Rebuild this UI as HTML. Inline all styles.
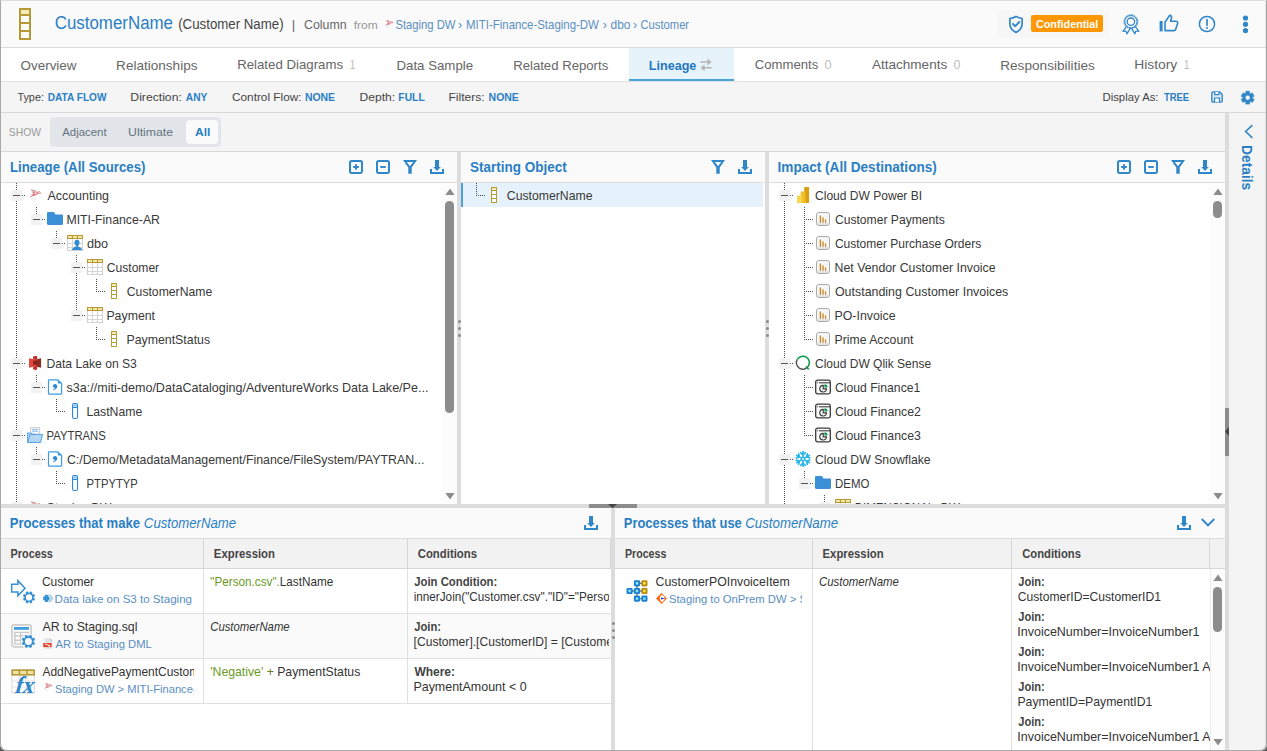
<!DOCTYPE html>
<html lang="en"><head><meta charset="utf-8"><title>CustomerName - Lineage</title>
<style>
html,body{margin:0;padding:0}
body{width:1267px;height:751px;overflow:hidden;position:relative;background:#5a5a5a;font-family:"Liberation Sans","DejaVu Sans",sans-serif}
.app{background:#fff;border-radius:0 0 7px 7px;overflow:hidden}
.frame{left:0;top:0;width:1267px;height:751px;box-sizing:border-box;border:1px solid #a9a9a9;border-right:1px solid #a4a4a4;box-shadow:inset -1px 0 0 rgba(0,0,0,.07);border-top-color:#dedede;border-radius:0 0 7px 7px;pointer-events:none}
div,section,header,nav,aside,.t,i.ico{position:absolute;display:block;margin:0;padding:0}
.t{white-space:nowrap;transform-origin:0 0;font-weight:normal;text-decoration:none}
i.ico{line-height:0;font-style:normal}
i.ico svg{display:block;overflow:visible}
.vd{background-image:linear-gradient(#4c4c4c 50%,rgba(0,0,0,0) 50%);background-size:1px 2px}
.hd{background-image:linear-gradient(90deg,#4c4c4c 50%,rgba(0,0,0,0) 50%);background-size:2px 1px}
.rot{transform-origin:0 0}
</style></head>
<body>
  <div class="app" style="left:0px;top:0px;width:1267px;height:751px;">
    <header class="hdr" style="left:1px;top:1px;width:1265px;height:46px;background:#fafafa;border-bottom:1px solid #dcdcdc">
      <i class="ico" style="left:18px;top:7px"><svg width="12" height="32" viewBox="0 0 12 32" ><rect x="1" y="1" width="10" height="30" fill="#fff" stroke="#b59a35" stroke-width="2"/><rect x="2" y="2" width="8" height="4" fill="#f6ecba"/><path d="M1 7h10M1 15h10M1 23h10" stroke="#b59a35" stroke-width="2" fill="none"/></svg></i>
      <h1 class="t" style="left:53px;top:11px;font-size:18px;line-height:23px;color:#2a7fc4;transform:translateX(0.76px) scaleX(0.9381);">CustomerName</h1>
      <span class="t" style="left:177px;top:14px;font-size:14px;line-height:18px;color:#444;transform:translateX(0.20px) scaleX(0.9472);">(Customer Name)</span>
      <span class="t" style="left:290px;top:15px;font-size:13px;line-height:17px;color:#666;transform:translateX(0.87px) scaleX(1.0256);">|</span>
      <span class="t" style="left:302px;top:15px;font-size:13px;line-height:17px;color:#666;transform:translateX(0.98px) scaleX(0.9504);">Column</span>
      <span class="t" style="left:352px;top:17px;font-size:11.8px;line-height:15px;color:#999;transform:translateX(0.68px) scaleX(1.0203);">from</span>
      <i class="ico" style="left:383px;top:18px"><svg width="10" height="10" viewBox="0 0 15 14" ><path d="M1.6 9.9 L5.6 5.4 L3 1.5 L7.2 1.9 L9.2 3.7 L12.2 2.9 L14.4 5.5 L10.6 6 L8.4 7.6 L4.8 8.4Z" fill="#cf3f49" opacity=".66"/><path d="M6.6 4.4 L8.8 4 L9.8 5.4 L7.6 6.4Z M4.2 2.4 L6.4 2.8 L7 3.8 L5.4 3.8Z M10.6 4 L12.4 3.8 L13 4.8 L11 5Z" fill="#fff" opacity=".7"/><path d="M3 1.4 H7" stroke="#b8c4cc" stroke-width=".7" opacity=".6"/><ellipse cx="6" cy="11.6" rx="3.6" ry="1.6" fill="#ededed" opacity=".6"/></svg></i>
      <a class="t" style="left:394px;top:16px;font-size:12.4px;line-height:16px;color:#5a8fc2;transform:translateX(0.49px) scaleX(0.9068);">Staging DW</a>
      <span class="t" style="left:457px;top:15px;font-size:13px;line-height:17px;color:#5a8fc2;transform:translateX(0.10px) scaleX(0.9653);">›</span>
      <a class="t" style="left:465px;top:16px;font-size:12.4px;line-height:16px;color:#5a8fc2;transform:translateX(0.08px) scaleX(0.9229);">MITI-Finance-Staging-DW</a>
      <span class="t" style="left:601px;top:15px;font-size:13px;line-height:17px;color:#5a8fc2;transform:translateX(0.70px) scaleX(0.9653);">›</span>
      <a class="t" style="left:609px;top:16px;font-size:12.4px;line-height:16px;color:#5a8fc2;transform:translateX(0.52px) scaleX(0.9653);">dbo</a>
      <span class="t" style="left:632px;top:15px;font-size:13px;line-height:17px;color:#5a8fc2;transform:translateX(0.10px) scaleX(0.9653);">›</span>
      <a class="t" style="left:639px;top:16px;font-size:12.4px;line-height:16px;color:#5a8fc2;transform:translateX(0.44px) scaleX(0.9062);">Customer</a>
      <div style="left:996px;top:9px;width:112px;height:28px;background:#f7f7f7;border-radius:3px">
      </div>
      <i class="ico" style="left:1007px;top:13.5px"><svg width="16" height="19" viewBox="0 0 16 19" ><path d="M8 1.4 C9.8 2.4 12 3.2 14.1 3.5 V8.8 C14.1 12.8 11.6 15.8 8 17.4 C4.4 15.8 1.9 12.8 1.9 8.8 V3.5 C4 3.2 6.2 2.4 8 1.4Z" fill="none" stroke="#2f86c9" stroke-width="1.7" stroke-linejoin="round"/><path d="M5 9 L7.3 11.2 L11.2 7" fill="none" stroke="#2f86c9" stroke-width="1.9" stroke-linecap="round" stroke-linejoin="round"/></svg></i>
      <div class="badge" style="left:1030px;top:14px;width:72px;height:17px;background:#ff9800;border-radius:2px">
        <span class="t" style="left:4px;top:2px;font-size:11px;line-height:14px;color:#fff;font-weight:bold;transform:translateX(0.97px) scaleX(0.9813);">Confidential</span>
      </div>
      <i class="ico" style="left:1121px;top:12.6px"><svg width="18" height="21" viewBox="0 0 18 21" ><circle cx="8.9" cy="7.7" r="6.9" fill="none" stroke="#2f86c9" stroke-width="1" stroke-dasharray="2 0.7"/><circle cx="8.9" cy="7.7" r="6.1" fill="none" stroke="#2f86c9" stroke-width="1"/><circle cx="8.9" cy="7.7" r="3.7" fill="#fff" stroke="#2f86c9" stroke-width="1.3"/><path d="M4.4 12.6 L0.9 17.3 L4 17 L4.9 19.9 L8.1 14.6 M13.4 12.6 L16.9 17.3 L13.8 17 L12.9 19.9 L9.7 14.6" fill="none" stroke="#2f86c9" stroke-width="1.2" stroke-linejoin="round"/></svg></i>
      <i class="ico" style="left:1158px;top:13.4px"><svg width="20" height="18" viewBox="0 0 20 18" ><rect x="0.6" y="7" width="3" height="10.4" fill="#2f86c9"/><path d="M6 16.6 V8.2 L10.6 1.4 C12.4 1.4 12.8 3 12.4 4.4 L11.6 7.2 H17 C18.4 7.2 19 8.4 18.6 9.6 L16.6 15.4 C16.3 16.2 15.6 16.6 14.8 16.6Z" fill="none" stroke="#2f86c9" stroke-width="1.6" stroke-linejoin="round"/></svg></i>
      <i class="ico" style="left:1197px;top:14px"><svg width="18" height="18" viewBox="0 0 18 18" ><circle cx="9" cy="9" r="7.6" fill="none" stroke="#2f86c9" stroke-width="1.5"/><path d="M9 4.6 V10.2" stroke="#2f86c9" stroke-width="1.7" stroke-linecap="round"/><circle cx="9" cy="13" r="1.05" fill="#2f86c9"/></svg></i>
      <i class="ico" style="left:1240.5px;top:13.6px"><svg width="7" height="19" viewBox="0 0 7 19" ><circle cx="3.5" cy="3" r="2.6" fill="#2f86c9"/><circle cx="3.5" cy="9.3" r="2.6" fill="#2f86c9"/><circle cx="3.5" cy="15.6" r="2.6" fill="#2f86c9"/></svg></i>
    </header>
    <nav class="tabs" style="left:1px;top:48px;width:1265px;height:34px;background:#fff;border-bottom:1px solid #e2e2e2;box-sizing:border-box">
      <a class="t" style="left:19px;top:9px;font-size:13.6px;line-height:18px;color:#666;transform:translateX(0.60px) scaleX(0.9857);">Overview</a>
      <a class="t" style="left:115px;top:9px;font-size:13.6px;line-height:18px;color:#666;transform:translateX(0.12px) scaleX(0.9965);">Relationships</a>
      <a class="t" style="left:236px;top:8px;font-size:13.6px;line-height:18px;color:#666;transform:translateX(0.14px) scaleX(0.9741);">Related Diagrams</a>
      <span class="t" style="left:348px;top:9px;font-size:12.6px;line-height:16px;color:#bdbdbd;transform:translateX(0.84px) scaleX(0.8028);">1</span>
      <a class="t" style="left:395px;top:9px;font-size:13.6px;line-height:18px;color:#666;transform:translateX(0.44px) scaleX(0.9757);">Data Sample</a>
      <a class="t" style="left:512px;top:9px;font-size:13.6px;line-height:18px;color:#666;transform:translateX(0.15px) scaleX(0.9678);">Related Reports</a>
      <div class="active" style="left:628px;top:0px;width:105px;height:33px;background:#e7f3fb;border-bottom:2px solid #48a5dc;box-sizing:border-box">
        <a class="t" style="left:19px;top:9px;font-size:13.6px;line-height:18px;color:#2277c0;font-weight:bold;transform:translateX(0.78px) scaleX(0.9264);">Lineage</a>
        <i class="ico" style="left:70.6px;top:10px"><svg width="12" height="14" viewBox="0 0 12 14" ><path d="M0.4 4 H8 M11.6 9.8 H4" stroke="#b7b7b7" stroke-width="1.4" fill="none"/><path d="M7.4 0.6 L11.6 4 L7.4 7.4Z M4.6 6.4 L0.4 9.8 L4.6 13.2Z" fill="#b7b7b7"/></svg></i>
      </div>
      <a class="t" style="left:753px;top:8px;font-size:13.6px;line-height:18px;color:#666;transform:translateX(0.74px) scaleX(0.9661);">Comments</a>
      <span class="t" style="left:823px;top:9px;font-size:12.6px;line-height:16px;color:#bdbdbd;transform:translateX(0.55px) scaleX(1.0146);">0</span>
      <a class="t" style="left:870px;top:8px;font-size:13.6px;line-height:18px;color:#666;transform:translateX(0.90px) scaleX(0.9971);">Attachments</a>
      <span class="t" style="left:952px;top:9px;font-size:12.6px;line-height:16px;color:#bdbdbd;transform:translateX(0.57px) scaleX(0.9818);">0</span>
      <a class="t" style="left:999px;top:9px;font-size:13.6px;line-height:18px;color:#666;transform:translateX(0.21px) scaleX(1.0019);">Responsibilities</a>
      <a class="t" style="left:1133px;top:8px;font-size:13.6px;line-height:18px;color:#666;transform:translateX(0.19px) scaleX(1.0188);">History</a>
      <span class="t" style="left:1182px;top:9px;font-size:12.6px;line-height:16px;color:#bdbdbd;transform:translateX(0.64px) scaleX(0.8028);">1</span>
    </nav>
    <div class="toolbar" style="left:1px;top:82px;width:1265px;height:30px;background:#f5f5f5;border-bottom:1px solid #d9d9d9">
      <span class="t" style="left:16px;top:8px;font-size:11.4px;line-height:15px;color:#444;transform:translateX(0.38px) scaleX(0.9530);">Type:</span>
      <span class="t" style="left:46px;top:8px;font-size:11.2px;line-height:15px;color:#2a7fc4;font-weight:bold;transform:translateX(0.74px) scaleX(0.9027);">DATA FLOW</span>
      <span class="t" style="left:129px;top:8px;font-size:11.4px;line-height:15px;color:#444;transform:translateX(0.32px) scaleX(1.0706);">Direction:</span>
      <span class="t" style="left:184px;top:8px;font-size:11.2px;line-height:15px;color:#2a7fc4;font-weight:bold;transform:translateX(0.80px) scaleX(0.9103);">ANY</span>
      <span class="t" style="left:231px;top:8px;font-size:11.4px;line-height:15px;color:#444;transform:translateX(0.01px) scaleX(1.0353);">Control Flow:</span>
      <span class="t" style="left:303px;top:8px;font-size:11.2px;line-height:15px;color:#2a7fc4;font-weight:bold;transform:translateX(0.92px) scaleX(0.9322);">NONE</span>
      <span class="t" style="left:358px;top:8px;font-size:11.4px;line-height:15px;color:#444;transform:translateX(0.54px) scaleX(1.0576);">Depth:</span>
      <span class="t" style="left:397px;top:8px;font-size:11.2px;line-height:15px;color:#2a7fc4;font-weight:bold;transform:translateX(0.33px) scaleX(0.9241);">FULL</span>
      <span class="t" style="left:447px;top:8px;font-size:11.4px;line-height:15px;color:#444;transform:translateX(0.43px) scaleX(1.0593);">Filters:</span>
      <span class="t" style="left:487px;top:8px;font-size:11.2px;line-height:15px;color:#2a7fc4;font-weight:bold;transform:translateX(0.62px) scaleX(0.9354);">NONE</span>
      <span class="t" style="left:1101px;top:8px;font-size:11.4px;line-height:15px;color:#444;transform:translateX(0.49px) scaleX(0.9945);">Display As:</span>
      <span class="t" style="left:1162px;top:8px;font-size:11.2px;line-height:15px;color:#2a7fc4;font-weight:bold;transform:translateX(0.91px) scaleX(0.8451);">TREE</span>
      <i class="ico" style="left:1210px;top:8.8px"><svg width="12" height="12" viewBox="0 0 13 13" ><path d="M2.2 0.9 H9.2 L12.1 3.8 V10.8 C12.1 11.6 11.6 12.1 10.8 12.1 H2.2 C1.4 12.1 0.9 11.6 0.9 10.8 V2.2 C0.9 1.4 1.4 0.9 2.2 0.9Z" fill="#dfeaf5" stroke="#2f86c9" stroke-width="1.5" stroke-linejoin="round"/><path d="M4 1 V4 H8.6 V1" fill="#f5f5f5" stroke="#2f86c9" stroke-width="1.3"/><path d="M3.8 12 V7.6 H9.2 V12" fill="#f5f5f5" stroke="#2f86c9" stroke-width="1.3"/></svg></i>
      <i class="ico" style="left:1239.6px;top:8.6px"><svg width="13.4" height="13.4" viewBox="0 0 13.4 13.4" ><path d="M4.79 2.34 L4.80 0.28 L8.60 0.28 L8.61 2.34 L9.52 2.87 L11.31 1.84 L13.21 5.14 L11.43 6.18 L11.43 7.22 L13.21 8.26 L11.31 11.56 L9.52 10.53 L8.61 11.06 L8.60 13.12 L4.80 13.12 L4.79 11.06 L3.88 10.53 L2.09 11.56 L0.19 8.26 L1.97 7.22 L1.97 6.18 L0.19 5.14 L2.09 1.84 L3.88 2.87Z M9.18 6.70 A2.479 2.479 0 1 0 4.22 6.70 A2.479 2.479 0 1 0 9.18 6.70Z" fill="#2f86c9" fill-rule="evenodd" stroke="#2f86c9" stroke-width="0.6" stroke-linejoin="round"/></svg></i>
    </div>
    <div class="showbar" style="left:1px;top:113px;width:1224px;height:38px;background:#f4f4f4;border-bottom:1px solid #d9d9d9">
      <span class="t" style="left:7px;top:12px;font-size:11.4px;line-height:15px;color:#9a9a9a;transform:translateX(0.83px) scaleX(0.9067);">SHOW</span>
      <div class="seg" style="left:49px;top:4px;width:171px;height:30px;background:#e2e6ea;border-radius:4px">
        <span class="t" style="left:12px;top:8px;font-size:11.4px;line-height:15px;color:#66727f;transform:translateX(0.20px) scaleX(1.0015);">Adjacent</span>
        <span class="t" style="left:78px;top:8px;font-size:11.4px;line-height:15px;color:#66727f;transform:translateX(0.08px) scaleX(1.0769);">Ultimate</span>
        <div class="on" style="left:136px;top:3px;width:32px;height:24px;background:#fbfbfb;border-radius:4px">
          <span class="t" style="left:8px;top:5px;font-size:11.4px;line-height:15px;color:#2a7fc4;font-weight:bold;transform:translateX(0.96px) scaleX(1.0615);">All</span>
        </div>
      </div>
    </div>
    <div class="vsplit" style="left:1225px;top:113px;width:4px;height:637px;background:#dcdcdc">
    </div>
    <div style="left:1225px;top:408px;width:4px;height:48px;background:#8c8c8c">
    </div>
    <i class="ico" style="left:1225px;top:427px"><svg width="4" height="9"><path d="M4 0 V9 L0 4.5Z" fill="#444"/></svg></i>
    <aside class="side" style="left:1229px;top:113px;width:37px;height:637px;background:#f4f4f4">
      <i class="ico" style="left:14.6px;top:10.6px"><svg width="10" height="15" viewBox="0 0 10 15" ><path d="M8.4 1.2 L1.6 7.5 L8.4 13.8" fill="none" stroke="#2f86c9" stroke-width="1.6" stroke-linejoin="miter"/></svg></i>
    </aside>
    <section class="panel" style="left:1px;top:152px;width:456px;height:352px;background:#fff;overflow:hidden">
      <div class="phead" style="left:0px;top:0px;width:456px;height:30px;background:#fafafa;border-bottom:1px solid #dcdcdc">
        <h2 class="t" style="left:8px;top:6px;font-size:14.8px;line-height:19px;color:#2a7fc4;font-weight:bold;transform:translateX(0.94px) scaleX(0.8954);">Lineage (All Sources)</h2>
        <i class="ico" style="left:429px;top:8px"><svg width="14" height="14" viewBox="0 0 14 14" ><path d="M5 0 H9 V7 H10.8 L7 11 L3.2 7 H5Z" fill="#2f86c9"/><path d="M1 9 V13 H13 V9" fill="none" stroke="#2f86c9" stroke-width="2"/></svg></i>
        <i class="ico" style="left:401px;top:8px"><svg width="16" height="14" viewBox="0 0 16 14" ><path d="M1 0 H15 L9.7 7.4 V13.8 H6.3 V7.4Z M4.8 2 H11.2 L8 6.3Z" fill="#2f86c9" fill-rule="evenodd"/></svg></i>
        <i class="ico" style="left:375px;top:8px"><svg width="14" height="14" viewBox="0 0 14 14" ><rect x="1" y="1" width="12" height="12" rx="1.4" fill="none" stroke="#2f86c9" stroke-width="2"/><path d="M4.2 7 H9.8" stroke="#2f86c9" stroke-width="1.9"/></svg></i>
        <i class="ico" style="left:348px;top:8px"><svg width="14" height="14" viewBox="0 0 14 14" ><rect x="1" y="1" width="12" height="12" rx="1.4" fill="none" stroke="#2f86c9" stroke-width="2"/><path d="M7 4.2 V9.8 M4.2 7 H9.8" stroke="#2f86c9" stroke-width="1.9"/></svg></i>
      </div>
      <div class="vd" style="left:15px;top:31px;width:1px;height:321px;">
      </div>
      <div class="vd" style="left:15px;top:31px;width:1px;height:7px;">
      </div>
      <div class="exp" style="left:10px;top:38px;width:11px;height:11px;background:#f2f2f2">
        <div style="left:2px;top:5px;width:7px;height:1px;background:#555">
        </div>
      </div>
      <div class="hd" style="left:21px;top:43px;width:3px;height:1px;">
      </div>
      <i class="ico" style="left:27px;top:36px"><svg width="14" height="14" viewBox="0 0 15 14" ><path d="M1.6 9.9 L5.6 5.4 L3 1.5 L7.2 1.9 L9.2 3.7 L12.2 2.9 L14.4 5.5 L10.6 6 L8.4 7.6 L4.8 8.4Z" fill="#cf3f49" opacity=".66"/><path d="M6.6 4.4 L8.8 4 L9.8 5.4 L7.6 6.4Z M4.2 2.4 L6.4 2.8 L7 3.8 L5.4 3.8Z M10.6 4 L12.4 3.8 L13 4.8 L11 5Z" fill="#fff" opacity=".7"/><path d="M3 1.4 H7" stroke="#b8c4cc" stroke-width=".7" opacity=".6"/><ellipse cx="6" cy="11.6" rx="3.6" ry="1.6" fill="#ededed" opacity=".6"/></svg></i>
      <span class="t" style="left:46px;top:36px;font-size:12.6px;line-height:16px;color:#383838;transform:translateX(0.40px) scaleX(0.9891);">Accounting</span>
      <div class="vd" style="left:35px;top:55px;width:1px;height:7px;">
      </div>
      <div class="exp" style="left:30px;top:62px;width:11px;height:11px;background:#f2f2f2">
        <div style="left:2px;top:5px;width:7px;height:1px;background:#555">
        </div>
      </div>
      <div class="hd" style="left:41px;top:67px;width:3px;height:1px;">
      </div>
      <i class="ico" style="left:46px;top:59px"><svg width="16" height="16" viewBox="0 0 16 16" ><path d="M0 2.1 C0 1.3 0.5 0.9 1.2 0.9 H6.2 C6.9 0.9 7.4 1.3 7.7 1.9 L8.4 3.5 H14.8 C15.5 3.5 16 4 16 4.7 V12.8 C16 13.5 15.5 14 14.8 14 H1.2 C0.5 14 0 13.5 0 12.8Z" fill="#3b8fd6"/></svg></i>
      <span class="t" style="left:65px;top:60px;font-size:12.6px;line-height:16px;color:#383838;transform:translateX(0.42px) scaleX(0.9759);">MITI-Finance-AR</span>
      <div class="vd" style="left:55px;top:79px;width:1px;height:7px;">
      </div>
      <div class="exp" style="left:50px;top:86px;width:11px;height:11px;background:#f2f2f2">
        <div style="left:2px;top:5px;width:7px;height:1px;background:#555">
        </div>
      </div>
      <div class="hd" style="left:61px;top:91px;width:3px;height:1px;">
      </div>
      <i class="ico" style="left:66px;top:83px"><svg width="16" height="16" viewBox="0 0 16 16" ><rect x="0.5" y="0.5" width="15" height="15" fill="#fff" stroke="#d2d2d2"/><path d="M5.5 4 V15.5 M10.5 4 V15.5 M0.5 8.5 H15.5 M0.5 12.5 H15.5" stroke="#d6d6d6" fill="none"/><rect x="0.5" y="0.5" width="15" height="3" fill="#f3e6a6" stroke="#b59a35"/><path d="M5.5 0.5 V3.5 M10.5 0.5 V3.5" stroke="#b59a35"/><ellipse cx="10" cy="7.6" rx="2.5" ry="2.9" fill="#2f8ad6"/><path d="M8.8 9.6 H11.2 V11.6 H8.8Z" fill="#2f8ad6"/><path d="M4.8 15 C5.6 12.8 7.4 11.6 10 11.6 C12.6 11.6 14.4 12.8 15.2 15Z" fill="#2f8ad6"/></svg></i>
      <span class="t" style="left:85px;top:84px;font-size:12.6px;line-height:16px;color:#383838;transform:translateX(0.89px) scaleX(1.0050);">dbo</span>
      <div class="vd" style="left:75px;top:103px;width:1px;height:7px;">
      </div>
      <div class="exp" style="left:70px;top:110px;width:11px;height:11px;background:#f2f2f2">
        <div style="left:2px;top:5px;width:7px;height:1px;background:#555">
        </div>
      </div>
      <div class="hd" style="left:81px;top:115px;width:3px;height:1px;">
      </div>
      <div class="vd" style="left:75px;top:121px;width:1px;height:30px;">
      </div>
      <i class="ico" style="left:86px;top:107px"><svg width="16" height="16" viewBox="0 0 16 16" ><rect x="0.5" y="0.5" width="15" height="15" fill="#fff" stroke="#d2d2d2"/><path d="M5.5 4 V15.5 M10.5 4 V15.5 M0.5 8.5 H15.5 M0.5 12.5 H15.5" stroke="#d6d6d6" fill="none"/><rect x="0.5" y="0.5" width="15" height="3" fill="#f3e6a6" stroke="#b59a35"/><path d="M5.5 0.5 V3.5 M10.5 0.5 V3.5" stroke="#b59a35"/></svg></i>
      <span class="t" style="left:105px;top:108px;font-size:12.6px;line-height:16px;color:#383838;transform:translateX(0.80px) scaleX(0.9587);">Customer</span>
      <div class="vd" style="left:95px;top:127px;width:1px;height:13px;">
      </div>
      <div class="hd" style="left:95px;top:139px;width:9px;height:1px;">
      </div>
      <i class="ico" style="left:106px;top:131px"><svg width="16" height="16" viewBox="0 0 16 16" ><rect x="4.5" y="0.5" width="5" height="15" fill="#fff" stroke="#b59a35"/><rect x="5" y="1" width="4" height="2" fill="#f6ebb4"/><path d="M4.5 3.5 H9.5 M4.5 7.5 H9.5 M4.5 11.5 H9.5" stroke="#b59a35"/></svg></i>
      <span class="t" style="left:125px;top:132px;font-size:12.6px;line-height:16px;color:#383838;transform:translateX(0.79px) scaleX(0.9681);">CustomerName</span>
      <div class="vd" style="left:75px;top:151px;width:1px;height:7px;">
      </div>
      <div class="exp" style="left:70px;top:158px;width:11px;height:11px;background:#f2f2f2">
        <div style="left:2px;top:5px;width:7px;height:1px;background:#555">
        </div>
      </div>
      <div class="hd" style="left:81px;top:163px;width:3px;height:1px;">
      </div>
      <i class="ico" style="left:86px;top:155px"><svg width="16" height="16" viewBox="0 0 16 16" ><rect x="0.5" y="0.5" width="15" height="15" fill="#fff" stroke="#d2d2d2"/><path d="M5.5 4 V15.5 M10.5 4 V15.5 M0.5 8.5 H15.5 M0.5 12.5 H15.5" stroke="#d6d6d6" fill="none"/><rect x="0.5" y="0.5" width="15" height="3" fill="#f3e6a6" stroke="#b59a35"/><path d="M5.5 0.5 V3.5 M10.5 0.5 V3.5" stroke="#b59a35"/></svg></i>
      <span class="t" style="left:105px;top:156px;font-size:12.6px;line-height:16px;color:#383838;transform:translateX(0.41px) scaleX(0.9778);">Payment</span>
      <div class="vd" style="left:95px;top:175px;width:1px;height:13px;">
      </div>
      <div class="hd" style="left:95px;top:187px;width:9px;height:1px;">
      </div>
      <i class="ico" style="left:106px;top:179px"><svg width="16" height="16" viewBox="0 0 16 16" ><rect x="4.5" y="0.5" width="5" height="15" fill="#fff" stroke="#b59a35"/><rect x="5" y="1" width="4" height="2" fill="#f6ebb4"/><path d="M4.5 3.5 H9.5 M4.5 7.5 H9.5 M4.5 11.5 H9.5" stroke="#b59a35"/></svg></i>
      <span class="t" style="left:125px;top:180px;font-size:12.6px;line-height:16px;color:#383838;transform:translateX(0.41px) scaleX(0.9798);">PaymentStatus</span>
      <div class="vd" style="left:15px;top:199px;width:1px;height:7px;">
      </div>
      <div class="exp" style="left:10px;top:206px;width:11px;height:11px;background:#f2f2f2">
        <div style="left:2px;top:5px;width:7px;height:1px;background:#555">
        </div>
      </div>
      <div class="hd" style="left:21px;top:211px;width:3px;height:1px;">
      </div>
      <i class="ico" style="left:26px;top:203px"><svg width="16" height="16" viewBox="0 0 16 16" ><path d="M2 3.2 L6.2 4.2 V11.8 L2 12.8Z" fill="#e0463c"/><path d="M14.1 3.2 L9.9 4.2 V11.8 L14.1 12.8Z" fill="#8e2a22"/><path d="M6 2.4 C6 1.4 7 1 8.05 1 C9.1 1 10.1 1.4 10.1 2.4 V13.6 C10.1 14.6 9.1 15 8.05 15 C7 15 6 14.6 6 13.6Z" fill="#d8392f"/><path d="M8.05 1 C9.1 1 10.1 1.4 10.1 2.4 V13.6 C10.1 14.6 9.1 15 8.05 15Z" fill="#a93027"/><rect x="6.3" y="5.8" width="3.5" height="3.6" fill="#7d211b"/><path d="M6 4.4 L8.05 5 L10.1 4.4 M6 11.6 L8.05 11 L10.1 11.6" stroke="#f0665c" stroke-width=".6" fill="none"/></svg></i>
      <span class="t" style="left:45px;top:204px;font-size:12.6px;line-height:16px;color:#383838;transform:translateX(0.43px) scaleX(0.9638);">Data Lake on S3</span>
      <div class="vd" style="left:35px;top:223px;width:1px;height:7px;">
      </div>
      <div class="exp" style="left:30px;top:230px;width:11px;height:11px;background:#f2f2f2">
        <div style="left:2px;top:5px;width:7px;height:1px;background:#555">
        </div>
      </div>
      <div class="hd" style="left:41px;top:235px;width:3px;height:1px;">
      </div>
      <i class="ico" style="left:46px;top:227px"><svg width="16" height="16" viewBox="0 0 16 16" ><path d="M2.3 0.8 H10.8 L14.6 4.6 V14.4 C14.6 14.9 14.3 15.2 13.8 15.2 H2.3 C1.8 15.2 1.5 14.9 1.5 14.4 V1.6 C1.5 1.1 1.8 0.8 2.3 0.8Z" fill="#fff" stroke="#3d9be0" stroke-width="1.2"/><path d="M10.8 0.4 V4.6 H15Z" fill="#3d9be0"/><path d="M8 4.9 C9.4 4.9 10.2 5.9 10.2 7.3 C10.2 9.3 8.8 10.7 6.4 11.2 L6.2 10.4 C7.4 10 8 9.4 8.2 8.7 C7 8.9 6 8.1 6 6.9 C6 5.7 6.8 4.9 8 4.9Z" fill="#2a86d8"/></svg></i>
      <span class="t" style="left:65px;top:228px;font-size:12.6px;line-height:16px;color:#383838;transform:translateX(0.59px) scaleX(0.9966);">s3a://miti-demo/DataCataloging/AdventureWorks Data Lake/Pe...</span>
      <div class="vd" style="left:55px;top:247px;width:1px;height:13px;">
      </div>
      <div class="hd" style="left:55px;top:259px;width:9px;height:1px;">
      </div>
      <i class="ico" style="left:66px;top:251px"><svg width="16" height="16" viewBox="0 0 16 16" ><rect x="5.55" y="0.55" width="5" height="14.9" rx="1.4" fill="#fff" stroke="#3189d6" stroke-width="1.1"/><path d="M6.1 1.1 H10 V3.8 H6.1Z" fill="#a3ccf0"/><path d="M5.5 4.5 H10.6" stroke="#3189d6" stroke-width="1.1"/></svg></i>
      <span class="t" style="left:85px;top:252px;font-size:12.6px;line-height:16px;color:#383838;transform:translateX(0.42px) scaleX(0.9732);">LastName</span>
      <div class="vd" style="left:15px;top:271px;width:1px;height:7px;">
      </div>
      <div class="exp" style="left:10px;top:278px;width:11px;height:11px;background:#f2f2f2">
        <div style="left:2px;top:5px;width:7px;height:1px;background:#555">
        </div>
      </div>
      <div class="hd" style="left:21px;top:283px;width:3px;height:1px;">
      </div>
      <i class="ico" style="left:26px;top:275px"><svg width="16" height="16" viewBox="0 0 16 16" ><path d="M3.4 0.6 H12.6 V8 H3.4Z" fill="#f7f7f7" stroke="#c4c4c4" stroke-width=".9"/><path d="M5 2.6 H11 M5 4.2 H11" stroke="#7db7ea" stroke-width=".9"/><path d="M0.6 6 H4.4 L5.4 7.2 H8 V15.2 H0.6Z" fill="#b4d6f2" stroke="#4a9be0" stroke-width=".9"/><path d="M3.2 7.4 H15.6 L13.6 15.4 H0.6Z" fill="#b4d6f2" stroke="#4a9be0" stroke-width=".9" stroke-linejoin="round"/></svg></i>
      <span class="t" style="left:45px;top:276px;font-size:12.6px;line-height:16px;color:#383838;transform:translateX(0.49px) scaleX(0.8991);">PAYTRANS</span>
      <div class="vd" style="left:35px;top:295px;width:1px;height:7px;">
      </div>
      <div class="exp" style="left:30px;top:302px;width:11px;height:11px;background:#f2f2f2">
        <div style="left:2px;top:5px;width:7px;height:1px;background:#555">
        </div>
      </div>
      <div class="hd" style="left:41px;top:307px;width:3px;height:1px;">
      </div>
      <i class="ico" style="left:46px;top:299px"><svg width="16" height="16" viewBox="0 0 16 16" ><path d="M2.3 0.8 H10.8 L14.6 4.6 V14.4 C14.6 14.9 14.3 15.2 13.8 15.2 H2.3 C1.8 15.2 1.5 14.9 1.5 14.4 V1.6 C1.5 1.1 1.8 0.8 2.3 0.8Z" fill="#fff" stroke="#3d9be0" stroke-width="1.2"/><path d="M10.8 0.4 V4.6 H15Z" fill="#3d9be0"/><path d="M8 4.9 C9.4 4.9 10.2 5.9 10.2 7.3 C10.2 9.3 8.8 10.7 6.4 11.2 L6.2 10.4 C7.4 10 8 9.4 8.2 8.7 C7 8.9 6 8.1 6 6.9 C6 5.7 6.8 4.9 8 4.9Z" fill="#2a86d8"/></svg></i>
      <span class="t" style="left:65px;top:300px;font-size:12.6px;line-height:16px;color:#383838;transform:translateX(0.88px) scaleX(0.9798);">C:/Demo/MetadataManagement/Finance/FileSystem/PAYTRAN...</span>
      <div class="vd" style="left:55px;top:319px;width:1px;height:13px;">
      </div>
      <div class="hd" style="left:55px;top:331px;width:9px;height:1px;">
      </div>
      <i class="ico" style="left:66px;top:323px"><svg width="16" height="16" viewBox="0 0 16 16" ><rect x="5.55" y="0.55" width="5" height="14.9" rx="1.4" fill="#fff" stroke="#3189d6" stroke-width="1.1"/><path d="M6.1 1.1 H10 V3.8 H6.1Z" fill="#a3ccf0"/><path d="M5.5 4.5 H10.6" stroke="#3189d6" stroke-width="1.1"/></svg></i>
      <span class="t" style="left:85px;top:324px;font-size:12.6px;line-height:16px;color:#383838;transform:translateX(0.50px) scaleX(0.8933);">PTPYTYP</span>
      <div class="vd" style="left:15px;top:343px;width:1px;height:7px;">
      </div>
      <div class="exp" style="left:10px;top:350px;width:11px;height:11px;background:#f2f2f2">
        <div style="left:2px;top:5px;width:7px;height:1px;background:#555">
        </div>
      </div>
      <div class="hd" style="left:21px;top:355px;width:3px;height:1px;">
      </div>
      <i class="ico" style="left:27px;top:348px"><svg width="14" height="14" viewBox="0 0 15 14" ><path d="M1.6 9.9 L5.6 5.4 L3 1.5 L7.2 1.9 L9.2 3.7 L12.2 2.9 L14.4 5.5 L10.6 6 L8.4 7.6 L4.8 8.4Z" fill="#cf3f49" opacity=".66"/><path d="M6.6 4.4 L8.8 4 L9.8 5.4 L7.6 6.4Z M4.2 2.4 L6.4 2.8 L7 3.8 L5.4 3.8Z M10.6 4 L12.4 3.8 L13 4.8 L11 5Z" fill="#fff" opacity=".7"/><path d="M3 1.4 H7" stroke="#b8c4cc" stroke-width=".7" opacity=".6"/><ellipse cx="6" cy="11.6" rx="3.6" ry="1.6" fill="#ededed" opacity=".6"/></svg></i>
      <span class="t" style="left:45px;top:348px;font-size:12.6px;line-height:16px;color:#383838;transform:translateX(0.85px) scaleX(0.9614);">Staging DW</span>
      <div class="strack" style="left:441px;top:31px;width:15px;height:321px;background:#fcfcfc">
      </div>
      <i class="ico" style="left:443.6px;top:36px"><svg width="10" height="7"><path d="M0.4 7 L5 0.4 L9.6 7Z" fill="#8c8c8c"/></svg></i>
      <i class="ico" style="left:443.6px;top:341px"><svg width="10" height="7"><path d="M0.4 0 L5 6.6 L9.6 0Z" fill="#8c8c8c"/></svg></i>
      <div class="sthumb" style="left:444px;top:48.6px;width:8.7px;height:212.4px;background:#8c8c8c;border-radius:4.3px">
      </div>
    </section>
    <div class="vsplit" style="left:457px;top:152px;width:4px;height:352px;background:#dcdcdc">
    </div>
    <div style="left:458px;top:320px;width:3px;height:3px;background:#8a8a8a;border-radius:50%">
    </div>
    <div style="left:458px;top:327px;width:3px;height:3px;background:#8a8a8a;border-radius:50%">
    </div>
    <div style="left:458px;top:334px;width:3px;height:3px;background:#8a8a8a;border-radius:50%">
    </div>
    <section class="panel" style="left:461px;top:152px;width:304px;height:352px;background:#fff;overflow:hidden">
      <div class="phead" style="left:0px;top:0px;width:304px;height:30px;background:#fafafa;border-bottom:1px solid #dcdcdc">
        <h2 class="t" style="left:9px;top:6px;font-size:14.8px;line-height:19px;color:#2a7fc4;font-weight:bold;transform:translateX(0.06px) scaleX(0.9111);">Starting Object</h2>
        <i class="ico" style="left:277px;top:8px"><svg width="14" height="14" viewBox="0 0 14 14" ><path d="M5 0 H9 V7 H10.8 L7 11 L3.2 7 H5Z" fill="#2f86c9"/><path d="M1 9 V13 H13 V9" fill="none" stroke="#2f86c9" stroke-width="2"/></svg></i>
        <i class="ico" style="left:249px;top:8px"><svg width="16" height="14" viewBox="0 0 16 14" ><path d="M1 0 H15 L9.7 7.4 V13.8 H6.3 V7.4Z M4.8 2 H11.2 L8 6.3Z" fill="#2f86c9" fill-rule="evenodd"/></svg></i>
      </div>
      <div class="sel" style="left:0px;top:31px;width:301.5px;height:24px;background:#e6f2fb;border-left:2px solid #4aa0dd;box-sizing:border-box">
      </div>
      <div class="vd" style="left:15px;top:31px;width:1px;height:13px;">
      </div>
      <div class="hd" style="left:15px;top:43px;width:9px;height:1px;">
      </div>
      <i class="ico" style="left:26px;top:35px"><svg width="16" height="16" viewBox="0 0 16 16" ><rect x="4.5" y="0.5" width="5" height="15" fill="#fff" stroke="#b59a35"/><rect x="5" y="1" width="4" height="2" fill="#f6ebb4"/><path d="M4.5 3.5 H9.5 M4.5 7.5 H9.5 M4.5 11.5 H9.5" stroke="#b59a35"/></svg></i>
      <span class="t" style="left:45px;top:36px;font-size:12.6px;line-height:16px;color:#383838;transform:translateX(0.79px) scaleX(0.9716);">CustomerName</span>
    </section>
    <div class="vsplit" style="left:765px;top:152px;width:4px;height:352px;background:#dcdcdc">
    </div>
    <div style="left:766px;top:320px;width:3px;height:3px;background:#8a8a8a;border-radius:50%">
    </div>
    <div style="left:766px;top:327px;width:3px;height:3px;background:#8a8a8a;border-radius:50%">
    </div>
    <div style="left:766px;top:334px;width:3px;height:3px;background:#8a8a8a;border-radius:50%">
    </div>
    <section class="panel" style="left:769px;top:152px;width:456px;height:352px;background:#fff;overflow:hidden">
      <div class="phead" style="left:0px;top:0px;width:456px;height:30px;background:#fafafa;border-bottom:1px solid #dcdcdc">
        <h2 class="t" style="left:8px;top:6px;font-size:14.8px;line-height:19px;color:#2a7fc4;font-weight:bold;transform:translateX(0.52px) scaleX(0.9183);">Impact (All Destinations)</h2>
        <i class="ico" style="left:429px;top:8px"><svg width="14" height="14" viewBox="0 0 14 14" ><path d="M5 0 H9 V7 H10.8 L7 11 L3.2 7 H5Z" fill="#2f86c9"/><path d="M1 9 V13 H13 V9" fill="none" stroke="#2f86c9" stroke-width="2"/></svg></i>
        <i class="ico" style="left:401px;top:8px"><svg width="16" height="14" viewBox="0 0 16 14" ><path d="M1 0 H15 L9.7 7.4 V13.8 H6.3 V7.4Z M4.8 2 H11.2 L8 6.3Z" fill="#2f86c9" fill-rule="evenodd"/></svg></i>
        <i class="ico" style="left:375px;top:8px"><svg width="14" height="14" viewBox="0 0 14 14" ><rect x="1" y="1" width="12" height="12" rx="1.4" fill="none" stroke="#2f86c9" stroke-width="2"/><path d="M4.2 7 H9.8" stroke="#2f86c9" stroke-width="1.9"/></svg></i>
        <i class="ico" style="left:348px;top:8px"><svg width="14" height="14" viewBox="0 0 14 14" ><rect x="1" y="1" width="12" height="12" rx="1.4" fill="none" stroke="#2f86c9" stroke-width="2"/><path d="M7 4.2 V9.8 M4.2 7 H9.8" stroke="#2f86c9" stroke-width="1.9"/></svg></i>
      </div>
      <div class="vd" style="left:15px;top:31px;width:1px;height:321px;">
      </div>
      <div class="vd" style="left:15px;top:31px;width:1px;height:7px;">
      </div>
      <div class="exp" style="left:10px;top:38px;width:11px;height:11px;background:#f2f2f2">
        <div style="left:2px;top:5px;width:7px;height:1px;background:#555">
        </div>
      </div>
      <div class="hd" style="left:21px;top:43px;width:3px;height:1px;">
      </div>
      <i class="ico" style="left:26px;top:35px"><svg width="16" height="16" viewBox="0 0 16 16" ><defs><linearGradient id="pb1" x1="0" y1="0" x2="1" y2="1"><stop offset="0" stop-color="#e8b10e"/><stop offset="1" stop-color="#c8870c"/></linearGradient></defs><rect x="9.2" y="0" width="4.9" height="16" rx=".6" fill="#dc9f0e"/><rect x="5.6" y="4.4" width="4.9" height="11.6" rx=".6" fill="#f0c02c"/><rect x="2" y="8.6" width="4.9" height="7.4" rx=".6" fill="#f6d751"/></svg></i>
      <span class="t" style="left:45px;top:36px;font-size:12.6px;line-height:16px;color:#383838;transform:translateX(1.00px) scaleX(0.9565);">Cloud DW Power BI</span>
      <div class="vd" style="left:35px;top:55px;width:1px;height:24px;">
      </div>
      <div class="hd" style="left:35px;top:67px;width:9px;height:1px;">
      </div>
      <i class="ico" style="left:46px;top:59px"><svg width="16" height="16" viewBox="0 0 16 16" ><rect x="1.5" y="1.5" width="13" height="13" rx="2.2" fill="#f6f6f6" stroke="#a9a9a9"/><path d="M1.8 13 H14.2" stroke="#d0d0d0"/><path d="M5.4 4.4 V11.8 M8 6.6 V11.8 M10.6 8.6 V11.8" stroke="#c8811c" stroke-width="1.3"/></svg></i>
      <span class="t" style="left:65px;top:60px;font-size:12.6px;line-height:16px;color:#383838;transform:translateX(0.89px) scaleX(0.9631);">Customer Payments</span>
      <div class="vd" style="left:35px;top:79px;width:1px;height:24px;">
      </div>
      <div class="hd" style="left:35px;top:91px;width:9px;height:1px;">
      </div>
      <i class="ico" style="left:46px;top:83px"><svg width="16" height="16" viewBox="0 0 16 16" ><rect x="1.5" y="1.5" width="13" height="13" rx="2.2" fill="#f6f6f6" stroke="#a9a9a9"/><path d="M1.8 13 H14.2" stroke="#d0d0d0"/><path d="M5.4 4.4 V11.8 M8 6.6 V11.8 M10.6 8.6 V11.8" stroke="#c8811c" stroke-width="1.3"/></svg></i>
      <span class="t" style="left:65px;top:84px;font-size:12.6px;line-height:16px;color:#383838;transform:translateX(0.90px) scaleX(0.9541);">Customer Purchase Orders</span>
      <div class="vd" style="left:35px;top:103px;width:1px;height:24px;">
      </div>
      <div class="hd" style="left:35px;top:115px;width:9px;height:1px;">
      </div>
      <i class="ico" style="left:46px;top:107px"><svg width="16" height="16" viewBox="0 0 16 16" ><rect x="1.5" y="1.5" width="13" height="13" rx="2.2" fill="#f6f6f6" stroke="#a9a9a9"/><path d="M1.8 13 H14.2" stroke="#d0d0d0"/><path d="M5.4 4.4 V11.8 M8 6.6 V11.8 M10.6 8.6 V11.8" stroke="#c8811c" stroke-width="1.3"/></svg></i>
      <span class="t" style="left:65px;top:108px;font-size:12.6px;line-height:16px;color:#383838;transform:translateX(0.51px) scaleX(0.9794);">Net Vendor Customer Invoice</span>
      <div class="vd" style="left:35px;top:127px;width:1px;height:24px;">
      </div>
      <div class="hd" style="left:35px;top:139px;width:9px;height:1px;">
      </div>
      <i class="ico" style="left:46px;top:131px"><svg width="16" height="16" viewBox="0 0 16 16" ><rect x="1.5" y="1.5" width="13" height="13" rx="2.2" fill="#f6f6f6" stroke="#a9a9a9"/><path d="M1.8 13 H14.2" stroke="#d0d0d0"/><path d="M5.4 4.4 V11.8 M8 6.6 V11.8 M10.6 8.6 V11.8" stroke="#c8811c" stroke-width="1.3"/></svg></i>
      <span class="t" style="left:65px;top:132px;font-size:12.6px;line-height:16px;color:#383838;transform:translateX(0.94px) scaleX(0.9864);">Outstanding Customer Invoices</span>
      <div class="vd" style="left:35px;top:151px;width:1px;height:24px;">
      </div>
      <div class="hd" style="left:35px;top:163px;width:9px;height:1px;">
      </div>
      <i class="ico" style="left:46px;top:155px"><svg width="16" height="16" viewBox="0 0 16 16" ><rect x="1.5" y="1.5" width="13" height="13" rx="2.2" fill="#f6f6f6" stroke="#a9a9a9"/><path d="M1.8 13 H14.2" stroke="#d0d0d0"/><path d="M5.4 4.4 V11.8 M8 6.6 V11.8 M10.6 8.6 V11.8" stroke="#c8811c" stroke-width="1.3"/></svg></i>
      <span class="t" style="left:65px;top:156px;font-size:12.6px;line-height:16px;color:#383838;transform:translateX(0.51px) scaleX(0.9803);">PO-Invoice</span>
      <div class="vd" style="left:35px;top:175px;width:1px;height:13px;">
      </div>
      <div class="hd" style="left:35px;top:187px;width:9px;height:1px;">
      </div>
      <i class="ico" style="left:46px;top:179px"><svg width="16" height="16" viewBox="0 0 16 16" ><rect x="1.5" y="1.5" width="13" height="13" rx="2.2" fill="#f6f6f6" stroke="#a9a9a9"/><path d="M1.8 13 H14.2" stroke="#d0d0d0"/><path d="M5.4 4.4 V11.8 M8 6.6 V11.8 M10.6 8.6 V11.8" stroke="#c8811c" stroke-width="1.3"/></svg></i>
      <span class="t" style="left:65px;top:180px;font-size:12.6px;line-height:16px;color:#383838;transform:translateX(0.52px) scaleX(0.9717);">Prime Account</span>
      <div class="vd" style="left:15px;top:199px;width:1px;height:7px;">
      </div>
      <div class="exp" style="left:10px;top:206px;width:11px;height:11px;background:#f2f2f2">
        <div style="left:2px;top:5px;width:7px;height:1px;background:#555">
        </div>
      </div>
      <div class="hd" style="left:21px;top:211px;width:3px;height:1px;">
      </div>
      <i class="ico" style="left:26px;top:203px"><svg width="16" height="16" viewBox="0 0 16 16" ><path d="M13.53 10.95 A6.5 6.5 0 0 1 2.27 4.45" fill="none" stroke="#54565b" stroke-width="1.5"/><path d="M2.27 4.45 A6.5 6.5 0 0 1 13.53 10.95" fill="none" stroke="#0a9a4a" stroke-width="1.5"/><path d="M11.4 11 L15 14.4 H12.8 L10.4 12.2Z" fill="#0a9a4a"/></svg></i>
      <span class="t" style="left:45px;top:204px;font-size:12.6px;line-height:16px;color:#383838;transform:translateX(1.00px) scaleX(0.9537);">Cloud DW Qlik Sense</span>
      <div class="vd" style="left:35px;top:223px;width:1px;height:24px;">
      </div>
      <div class="hd" style="left:35px;top:235px;width:9px;height:1px;">
      </div>
      <i class="ico" style="left:46px;top:227px"><svg width="16" height="16" viewBox="0 0 16 16" ><rect x="0.7" y="1.1" width="14.6" height="13.8" rx="1.8" fill="#fff" stroke="#3a3a3a" stroke-width="1.3"/><path d="M4 3.8 H15" stroke="#3a3a3a" stroke-width="1.1"/><path d="M2 3.8 H3" stroke="#3a3a3a" stroke-width="1.1"/><path d="M8.2 6.4 A3.3 3.3 0 1 0 11.4 9.8 H8.2Z" fill="none" stroke="#3a3a3a" stroke-width="1.2"/><path d="M9.4 5.2 A3.2 3.2 0 0 1 12.6 8.4 H9.4Z" fill="#0a9a4a"/></svg></i>
      <span class="t" style="left:65px;top:228px;font-size:12.6px;line-height:16px;color:#383838;transform:translateX(0.89px) scaleX(0.9685);">Cloud Finance1</span>
      <div class="vd" style="left:35px;top:247px;width:1px;height:24px;">
      </div>
      <div class="hd" style="left:35px;top:259px;width:9px;height:1px;">
      </div>
      <i class="ico" style="left:46px;top:251px"><svg width="16" height="16" viewBox="0 0 16 16" ><rect x="0.7" y="1.1" width="14.6" height="13.8" rx="1.8" fill="#fff" stroke="#3a3a3a" stroke-width="1.3"/><path d="M4 3.8 H15" stroke="#3a3a3a" stroke-width="1.1"/><path d="M2 3.8 H3" stroke="#3a3a3a" stroke-width="1.1"/><path d="M8.2 6.4 A3.3 3.3 0 1 0 11.4 9.8 H8.2Z" fill="none" stroke="#3a3a3a" stroke-width="1.2"/><path d="M9.4 5.2 A3.2 3.2 0 0 1 12.6 8.4 H9.4Z" fill="#0a9a4a"/></svg></i>
      <span class="t" style="left:65px;top:252px;font-size:12.6px;line-height:16px;color:#383838;transform:translateX(0.89px) scaleX(0.9742);">Cloud Finance2</span>
      <div class="vd" style="left:35px;top:271px;width:1px;height:13px;">
      </div>
      <div class="hd" style="left:35px;top:283px;width:9px;height:1px;">
      </div>
      <i class="ico" style="left:46px;top:275px"><svg width="16" height="16" viewBox="0 0 16 16" ><rect x="0.7" y="1.1" width="14.6" height="13.8" rx="1.8" fill="#fff" stroke="#3a3a3a" stroke-width="1.3"/><path d="M4 3.8 H15" stroke="#3a3a3a" stroke-width="1.1"/><path d="M2 3.8 H3" stroke="#3a3a3a" stroke-width="1.1"/><path d="M8.2 6.4 A3.3 3.3 0 1 0 11.4 9.8 H8.2Z" fill="none" stroke="#3a3a3a" stroke-width="1.2"/><path d="M9.4 5.2 A3.2 3.2 0 0 1 12.6 8.4 H9.4Z" fill="#0a9a4a"/></svg></i>
      <span class="t" style="left:65px;top:276px;font-size:12.6px;line-height:16px;color:#383838;transform:translateX(0.89px) scaleX(0.9735);">Cloud Finance3</span>
      <div class="vd" style="left:15px;top:295px;width:1px;height:7px;">
      </div>
      <div class="exp" style="left:10px;top:302px;width:11px;height:11px;background:#f2f2f2">
        <div style="left:2px;top:5px;width:7px;height:1px;background:#555">
        </div>
      </div>
      <div class="hd" style="left:21px;top:307px;width:3px;height:1px;">
      </div>
      <i class="ico" style="left:26px;top:299px"><svg width="16" height="16" viewBox="0 0 16 16" ><g transform="rotate(0 8 8)"><path d="M8 6.2 V0.6 M5.6 1.6 L8 4 L10.4 1.6" fill="none" stroke="#29b5e8" stroke-width="1.6" stroke-linecap="round" stroke-linejoin="round"/></g><g transform="rotate(60 8 8)"><path d="M8 6.2 V0.6 M5.6 1.6 L8 4 L10.4 1.6" fill="none" stroke="#29b5e8" stroke-width="1.6" stroke-linecap="round" stroke-linejoin="round"/></g><g transform="rotate(120 8 8)"><path d="M8 6.2 V0.6 M5.6 1.6 L8 4 L10.4 1.6" fill="none" stroke="#29b5e8" stroke-width="1.6" stroke-linecap="round" stroke-linejoin="round"/></g><g transform="rotate(180 8 8)"><path d="M8 6.2 V0.6 M5.6 1.6 L8 4 L10.4 1.6" fill="none" stroke="#29b5e8" stroke-width="1.6" stroke-linecap="round" stroke-linejoin="round"/></g><g transform="rotate(240 8 8)"><path d="M8 6.2 V0.6 M5.6 1.6 L8 4 L10.4 1.6" fill="none" stroke="#29b5e8" stroke-width="1.6" stroke-linecap="round" stroke-linejoin="round"/></g><g transform="rotate(300 8 8)"><path d="M8 6.2 V0.6 M5.6 1.6 L8 4 L10.4 1.6" fill="none" stroke="#29b5e8" stroke-width="1.6" stroke-linecap="round" stroke-linejoin="round"/></g><rect x="6.6" y="6.6" width="2.8" height="2.8" transform="rotate(45 8 8)" fill="none" stroke="#29b5e8" stroke-width="1.1"/></svg></i>
      <span class="t" style="left:45px;top:300px;font-size:12.6px;line-height:16px;color:#383838;transform:translateX(0.99px) scaleX(0.9720);">Cloud DW Snowflake</span>
      <div class="vd" style="left:35px;top:319px;width:1px;height:7px;">
      </div>
      <div class="exp" style="left:30px;top:326px;width:11px;height:11px;background:#f2f2f2">
        <div style="left:2px;top:5px;width:7px;height:1px;background:#555">
        </div>
      </div>
      <div class="hd" style="left:41px;top:331px;width:3px;height:1px;">
      </div>
      <i class="ico" style="left:46px;top:323px"><svg width="16" height="16" viewBox="0 0 16 16" ><path d="M0 2.1 C0 1.3 0.5 0.9 1.2 0.9 H6.2 C6.9 0.9 7.4 1.3 7.7 1.9 L8.4 3.5 H14.8 C15.5 3.5 16 4 16 4.7 V12.8 C16 13.5 15.5 14 14.8 14 H1.2 C0.5 14 0 13.5 0 12.8Z" fill="#3b8fd6"/></svg></i>
      <span class="t" style="left:66px;top:324px;font-size:12.6px;line-height:16px;color:#383838;transform:translateX(0.08px) scaleX(0.9119);">DEMO</span>
      <div class="vd" style="left:55px;top:343px;width:1px;height:7px;">
      </div>
      <div class="exp" style="left:50px;top:350px;width:11px;height:11px;background:#f2f2f2">
        <div style="left:2px;top:5px;width:7px;height:1px;background:#555">
        </div>
      </div>
      <div class="hd" style="left:61px;top:355px;width:3px;height:1px;">
      </div>
      <i class="ico" style="left:66px;top:347px"><svg width="16" height="16" viewBox="0 0 16 16" ><rect x="0.5" y="0.5" width="15" height="15" fill="#fff" stroke="#d2d2d2"/><path d="M5.5 4 V15.5 M10.5 4 V15.5 M0.5 8.5 H15.5 M0.5 12.5 H15.5" stroke="#d6d6d6" fill="none"/><rect x="0.5" y="0.5" width="15" height="3" fill="#f3e6a6" stroke="#b59a35"/><path d="M5.5 0.5 V3.5 M10.5 0.5 V3.5" stroke="#b59a35"/></svg></i>
      <span class="t" style="left:85px;top:348px;font-size:12.6px;line-height:16px;color:#383838;transform:translateX(0.68px) scaleX(0.9172);">DIMENSIONAL_DW</span>
      <div class="strack" style="left:441px;top:31px;width:15px;height:321px;background:#fcfcfc">
      </div>
      <i class="ico" style="left:443.5999999999999px;top:36px"><svg width="10" height="7"><path d="M0.4 7 L5 0.4 L9.6 7Z" fill="#8c8c8c"/></svg></i>
      <i class="ico" style="left:443.5999999999999px;top:341px"><svg width="10" height="7"><path d="M0.4 0 L5 6.6 L9.6 0Z" fill="#8c8c8c"/></svg></i>
      <div class="sthumb" style="left:444px;top:48.8px;width:8.7px;height:17px;background:#8c8c8c;border-radius:4.3px">
      </div>
    </section>
    <div class="hsplit" style="left:1px;top:504px;width:1224px;height:4px;background:#dcdcdc">
    </div>
    <div style="left:589px;top:504px;width:48px;height:4px;background:#8c8c8c">
    </div>
    <i class="ico" style="left:608px;top:504px"><svg width="9" height="4"><path d="M0 0 H9 L4.5 4Z" fill="#444"/></svg></i>
    <section class="panel" style="left:1px;top:508px;width:610px;height:242px;background:#fff;overflow:hidden">
      <div class="phead" style="left:0px;top:0px;width:610px;height:30px;background:#fafafa;border-bottom:1px solid #dcdcdc">
        <h2 class="t" style="left:8px;top:6px;font-size:14.8px;line-height:19px;color:#2a7fc4;font-weight:bold;transform:translateX(0.75px) scaleX(0.8852);">Processes that make</h2>
        <span class="t" style="left:142px;top:6px;font-size:14.8px;line-height:19px;color:#2a7fc4;font-style:italic;transform:translateX(0.87px) scaleX(0.8907);">CustomerName</span>
      </div>
      <div class="thead" style="left:0px;top:31px;width:610px;height:29px;background:#f2f2f2;border-bottom:1px solid #d6d6d6">
        <div class="th" style="left:0px;top:0px;width:203px;height:29px;border-right:1px solid #d6d6d6;box-sizing:border-box">
          <span class="t" style="left:9px;top:7px;font-size:12.4px;line-height:16px;color:#444;font-weight:bold;transform:translateX(0.60px) scaleX(0.8744);">Process</span>
        </div>
        <div class="th" style="left:203px;top:0px;width:204px;height:29px;border-right:1px solid #d6d6d6;box-sizing:border-box">
          <span class="t" style="left:9px;top:7px;font-size:12.4px;line-height:16px;color:#444;font-weight:bold;transform:translateX(0.86px) scaleX(0.9144);">Expression</span>
        </div>
        <div class="th" style="left:407px;top:0px;width:203px;height:29px;border-right:1px solid #d6d6d6;box-sizing:border-box">
          <span class="t" style="left:9px;top:7px;font-size:12.4px;line-height:16px;color:#444;font-weight:bold;transform:translateX(0.75px) scaleX(0.9154);">Conditions</span>
        </div>
      </div>
      <i class="ico" style="left:583px;top:8px"><svg width="14" height="14" viewBox="0 0 14 14" ><path d="M5 0 H9 V7 H10.8 L7 11 L3.2 7 H5Z" fill="#2f86c9"/><path d="M1 9 V13 H13 V9" fill="none" stroke="#2f86c9" stroke-width="2"/></svg></i>
      <div class="td" style="left:0px;top:61px;width:203px;height:45px;border-bottom:1px solid #e0e0e0;box-sizing:border-box;overflow:hidden;border-right:1px solid #e0e0e0;">
        <div style="left:0px;top:0px;width:192.6px;height:44px;overflow:hidden">
          <i class="ico" style="left:9px;top:9px"><svg width="26" height="26" viewBox="0 0 26 26" ><path d="M1.7 6.2 H7.9 V2.7 L15 10.2 L7.9 17.8 V14.1 H1.7Z" fill="#fff" stroke="#3590d4" stroke-width="1.5" stroke-linejoin="miter"/><path d="M19.48 14.72 L20.21 13.32 L22.44 14.24 L21.97 15.76 L22.64 16.43 L24.16 15.96 L25.08 18.19 L23.68 18.92 L23.68 19.88 L25.08 20.61 L24.16 22.84 L22.64 22.37 L21.97 23.04 L22.44 24.56 L20.21 25.48 L19.48 24.08 L18.52 24.08 L17.79 25.48 L15.56 24.56 L16.03 23.04 L15.36 22.37 L13.84 22.84 L12.92 20.61 L14.32 19.88 L14.32 18.92 L12.92 18.19 L13.84 15.96 L15.36 16.43 L16.03 15.76 L15.56 14.24 L17.79 13.32 L18.52 14.72Z M22.10 19.40 A3.1 3.1 0 1 0 15.90 19.40 A3.1 3.1 0 1 0 22.10 19.40Z" fill="#3590d4" fill-rule="evenodd"/></svg></i>
          <span class="t" style="left:40px;top:5px;font-size:12.6px;line-height:16px;color:#333;transform:translateX(0.90px) scaleX(0.9569);">Customer</span>
          <i class="ico" style="left:41.5px;top:25px"><svg width="10" height="9" viewBox="0 0 10 9" ><path d="M0.2 2.6 H1.8 V0.8 H4.4 L7 4.4 L4.4 8 H1.8 V6.2 H0.2Z" fill="#3590d4"/><path d="M5.6 0.5 L8.4 4.4 L5.6 8.3 M7 0.5 L9.8 4.4 L7 8.3" stroke="#3590d4" stroke-width=".6" fill="none"/></svg></i>
          <a class="t" style="left:53px;top:23px;font-size:11.5px;line-height:15px;color:#5a8fc2;transform:translateX(0.58px) scaleX(1.0045);">Data lake on S3 to Staging</a>
        </div>
      </div>
      <div class="td" style="left:203px;top:61px;width:204px;height:45px;border-bottom:1px solid #e0e0e0;box-sizing:border-box;overflow:hidden;border-right:1px solid #e0e0e0;">
        <span class="t" style="left:6px;top:5px;font-size:12.6px;line-height:16px;color:#333;transform:translateX(0.33px) scaleX(0.9301);"><span style="color:#6c9a1f">&quot;Person.csv&quot;.</span>LastName</span>
      </div>
      <div class="td" style="left:407px;top:61px;width:203px;height:45px;border-bottom:1px solid #e0e0e0;box-sizing:border-box;overflow:hidden;">
        <div style="left:0px;top:0px;width:201.4px;height:44px;overflow:hidden">
          <span class="t" style="left:6px;top:5px;font-size:12.6px;line-height:16px;color:#444;font-weight:bold;transform:translateX(0.23px) scaleX(0.8998);">Join Condition:</span>
          <span class="t" style="left:5px;top:20px;font-size:12.6px;line-height:16px;color:#333;transform:translateX(0.64px) scaleX(0.9323);">innerJoin(&quot;Customer.csv&quot;.&quot;ID&quot;=&quot;Person.csv&quot;.&quot;CustomerID&quot;)</span>
        </div>
      </div>
      <div class="td" style="left:0px;top:106px;width:203px;height:45px;border-bottom:1px solid #e0e0e0;box-sizing:border-box;overflow:hidden;border-right:1px solid #e0e0e0;background:#fafafa;">
        <div style="left:0px;top:0px;width:192.6px;height:44px;overflow:hidden">
          <i class="ico" style="left:9px;top:9px"><svg width="26" height="26" viewBox="0 0 26 26" ><rect x="2" y="1.9" width="19.1" height="22" rx="2.2" fill="#fdfdfd" stroke="#cdcdcd" stroke-width="1.7"/><rect x="4" y="4" width="15" height="2.8" fill="#3f9fe0"/><path d="M4.8 9.4 H18.3 V21.1 H4.8Z M10.6 9.4 V21.1 M4.8 12.8 H18.3 M4.8 17.2 H18.3" stroke="#c9c9c9" stroke-width="1.4" fill="none"/><circle cx="18.4" cy="18.4" r="7.7" fill="#fbfbfb"/><path d="M18.92 13.33 L19.73 11.73 L22.18 12.75 L21.62 14.44 L22.36 15.18 L24.05 14.62 L25.07 17.07 L23.47 17.88 L23.47 18.92 L25.07 19.73 L24.05 22.18 L22.36 21.62 L21.62 22.36 L22.18 24.05 L19.73 25.07 L18.92 23.47 L17.88 23.47 L17.07 25.07 L14.62 24.05 L15.18 22.36 L14.44 21.62 L12.75 22.18 L11.73 19.73 L13.33 18.92 L13.33 17.88 L11.73 17.07 L12.75 14.62 L14.44 15.18 L15.18 14.44 L14.62 12.75 L17.07 11.73 L17.88 13.33Z M21.90 18.40 A3.5 3.5 0 1 0 14.90 18.40 A3.5 3.5 0 1 0 21.90 18.40Z" fill="#3590d4" fill-rule="evenodd"/></svg></i>
          <span class="t" style="left:41px;top:5px;font-size:12.6px;line-height:16px;color:#333;transform:translateX(0.50px) scaleX(0.9754);">AR to Staging.sql</span>
          <i class="ico" style="left:41.5px;top:24px"><svg width="10" height="11" viewBox="0 0 10 11" ><path d="M1.6 0.2 H7 L9.6 2.8 V10.8 H1.6Z" fill="#dfe3e6"/><path d="M7 0.2 V2.8 H9.6Z" fill="#b9c0c6"/><rect x="0.2" y="5" width="8.4" height="4.1" fill="#e8432e"/><path d="M1.8 6.2 H4 C4.6 7.6 5.6 7.8 7 7.8 M5.8 6.6 L7 7.8 L5.8 8.8" stroke="#fff" stroke-width=".9" fill="none"/></svg></i>
          <a class="t" style="left:54px;top:23px;font-size:11.5px;line-height:15px;color:#5a8fc2;transform:translateX(0.50px) scaleX(0.9778);">AR to Staging DML</a>
        </div>
      </div>
      <div class="td" style="left:203px;top:106px;width:204px;height:45px;border-bottom:1px solid #e0e0e0;box-sizing:border-box;overflow:hidden;border-right:1px solid #e0e0e0;background:#fafafa;">
        <span class="t" style="left:6px;top:5px;font-size:12.6px;line-height:16px;color:#333;font-style:italic;transform:translateX(0.18px) scaleX(0.9015);">CustomerName</span>
      </div>
      <div class="td" style="left:407px;top:106px;width:203px;height:45px;border-bottom:1px solid #e0e0e0;box-sizing:border-box;overflow:hidden;background:#fafafa;">
        <div style="left:0px;top:0px;width:201.4px;height:44px;overflow:hidden">
          <span class="t" style="left:6px;top:5px;font-size:12.6px;line-height:16px;color:#444;font-weight:bold;transform:translateX(0.23px) scaleX(0.8909);">Join:</span>
          <span class="t" style="left:5px;top:20px;font-size:12.6px;line-height:16px;color:#333;transform:translateX(0.55px) scaleX(0.9612);">[Customer].[CustomerID] = [CustomerPayment].[CustomerID]</span>
        </div>
      </div>
      <div class="td" style="left:0px;top:151px;width:203px;height:45px;border-bottom:1px solid #e0e0e0;box-sizing:border-box;overflow:hidden;border-right:1px solid #e0e0e0;">
        <div style="left:0px;top:0px;width:192.6px;height:44px;overflow:hidden">
          <i class="ico" style="left:9.6px;top:9.6px"><svg width="25" height="25" viewBox="0 0 25 25" ><rect x="0.9" y="0.9" width="22.4" height="23.2" fill="#fff" stroke="#d9d9d9"/><path d="M8.4 6 V24 M16 6 V24 M1 12 H23.4 M1 18 H23.4" stroke="#e2e2e2" fill="none"/><rect x="1.2" y="1.2" width="22" height="4.6" fill="#efe3a8" stroke="#b59a35" stroke-width="1.6"/><path d="M8.4 0.6 V6 M16 0.6 V6" stroke="#b59a35" stroke-width="1.5"/><text x="10" y="24" transform="skewX(-16)" font-family="Liberation Serif, serif" font-weight="bold" font-size="24" fill="#2f86c9" textLength="18.6" lengthAdjust="spacingAndGlyphs">fx</text></svg></i>
          <span class="t" style="left:41px;top:5px;font-size:12.6px;line-height:16px;color:#333;transform:translateX(0.50px) scaleX(0.9483);">AddNegativePaymentCustomerName</span>
          <i class="ico" style="left:42.2px;top:23.4px"><svg width="10" height="10" viewBox="0 0 15 14" ><path d="M1.6 9.9 L5.6 5.4 L3 1.5 L7.2 1.9 L9.2 3.7 L12.2 2.9 L14.4 5.5 L10.6 6 L8.4 7.6 L4.8 8.4Z" fill="#cf3f49" opacity=".66"/><path d="M6.6 4.4 L8.8 4 L9.8 5.4 L7.6 6.4Z M4.2 2.4 L6.4 2.8 L7 3.8 L5.4 3.8Z M10.6 4 L12.4 3.8 L13 4.8 L11 5Z" fill="#fff" opacity=".7"/><path d="M3 1.4 H7" stroke="#b8c4cc" stroke-width=".7" opacity=".6"/><ellipse cx="6" cy="11.6" rx="3.6" ry="1.6" fill="#ededed" opacity=".6"/></svg></i>
          <a class="t" style="left:53px;top:23px;font-size:11.5px;line-height:15px;color:#5a8fc2;transform:translateX(1.00px) scaleX(0.9695);">Staging DW &gt; MITI-Finance-Staging-DW</a>
        </div>
      </div>
      <div class="td" style="left:203px;top:151px;width:204px;height:45px;border-bottom:1px solid #e0e0e0;box-sizing:border-box;overflow:hidden;border-right:1px solid #e0e0e0;">
        <span class="t" style="left:6px;top:5px;font-size:12.6px;line-height:16px;color:#333;transform:translateX(0.19px) scaleX(0.9728);"><span style="color:#6c9a1f">&#x27;Negative&#x27;</span><span style="color:#66801f"> + </span>PaymentStatus</span>
      </div>
      <div class="td" style="left:407px;top:151px;width:203px;height:45px;border-bottom:1px solid #e0e0e0;box-sizing:border-box;overflow:hidden;">
        <div style="left:0px;top:0px;width:201.4px;height:44px;overflow:hidden">
          <span class="t" style="left:6px;top:5px;font-size:12.6px;line-height:16px;color:#444;font-weight:bold;transform:translateX(0.40px) scaleX(0.9511);">Where:</span>
          <span class="t" style="left:5px;top:20px;font-size:12.6px;line-height:16px;color:#333;transform:translateX(0.40px) scaleX(0.9889);">PaymentAmount &lt; 0</span>
        </div>
      </div>
    </section>
    <div class="vsplit" style="left:611px;top:508px;width:4px;height:242px;background:#dcdcdc">
    </div>
    <div style="left:612px;top:621.5px;width:3px;height:3px;background:#8a8a8a;border-radius:50%">
    </div>
    <div style="left:612px;top:628.5px;width:3px;height:3px;background:#8a8a8a;border-radius:50%">
    </div>
    <div style="left:612px;top:635.5px;width:3px;height:3px;background:#8a8a8a;border-radius:50%">
    </div>
    <section class="panel" style="left:615px;top:508px;width:610px;height:242px;background:#fff;overflow:hidden">
      <div class="phead" style="left:0px;top:0px;width:610px;height:30px;background:#fafafa;border-bottom:1px solid #dcdcdc">
        <h2 class="t" style="left:8px;top:6px;font-size:14.8px;line-height:19px;color:#2a7fc4;font-weight:bold;transform:translateX(0.76px) scaleX(0.8750);">Processes that use</h2>
        <span class="t" style="left:130px;top:6px;font-size:14.8px;line-height:19px;color:#2a7fc4;font-style:italic;transform:translateX(0.27px) scaleX(0.8966);">CustomerName</span>
      </div>
      <div class="thead" style="left:0px;top:31px;width:610px;height:29px;background:#f2f2f2;border-bottom:1px solid #d6d6d6">
        <div class="th" style="left:0px;top:0px;width:198px;height:29px;border-right:1px solid #d6d6d6;box-sizing:border-box">
          <span class="t" style="left:9px;top:7px;font-size:12.4px;line-height:16px;color:#444;font-weight:bold;transform:translateX(0.91px) scaleX(0.8595);">Process</span>
        </div>
        <div class="th" style="left:198px;top:0px;width:199px;height:29px;border-right:1px solid #d6d6d6;box-sizing:border-box">
          <span class="t" style="left:9px;top:7px;font-size:12.4px;line-height:16px;color:#444;font-weight:bold;transform:translateX(0.56px) scaleX(0.9144);">Expression</span>
        </div>
        <div class="th" style="left:397px;top:0px;width:198px;height:29px;border-right:1px solid #d6d6d6;box-sizing:border-box">
          <span class="t" style="left:10px;top:7px;font-size:12.4px;line-height:16px;color:#444;font-weight:bold;transform:translateX(0.15px) scaleX(0.9091);">Conditions</span>
        </div>
      </div>
      <i class="ico" style="left:562px;top:8px"><svg width="14" height="14" viewBox="0 0 14 14" ><path d="M5 0 H9 V7 H10.8 L7 11 L3.2 7 H5Z" fill="#2f86c9"/><path d="M1 9 V13 H13 V9" fill="none" stroke="#2f86c9" stroke-width="2"/></svg></i>
      <i class="ico" style="left:586px;top:10.2px"><svg width="14" height="9" viewBox="0 0 14 9" ><path d="M0.8 1 L7 7.4 L13.2 1" fill="none" stroke="#2f86c9" stroke-width="1.9"/></svg></i>
      <div class="td" style="left:0px;top:61px;width:198px;height:181px;border-right:1px solid #e0e0e0;box-sizing:border-box">
        <div style="left:0px;top:-1px;width:187.4px;height:60px;overflow:hidden">
          <i class="ico" style="left:11px;top:12px"><svg width="23" height="23" viewBox="0 0 23 23" ><path d="M6 11 H9 M11 6 V9 M11 13 V16 M13.5 3.3 H16 M13.5 11 H16 M13.5 18.6 H16" stroke="#777" stroke-width="1.4" fill="none"/><rect x="1.45" y="8.85" width="4.3" height="4.3" rx=".5" fill="#8fe9ff" stroke="#1b80d2" stroke-width="1.9"/><rect x="8.85" y="1.15" width="4.3" height="4.3" rx=".5" fill="#8fe9ff" stroke="#1b80d2" stroke-width="1.9"/><rect x="8.85" y="8.85" width="4.3" height="4.3" rx=".5" fill="#8fe9ff" stroke="#1b80d2" stroke-width="1.9"/><rect x="8.85" y="16.45" width="4.3" height="4.3" rx=".5" fill="#8fe9ff" stroke="#1b80d2" stroke-width="1.9"/><rect x="16.25" y="1.15" width="4.3" height="4.3" rx=".5" fill="#ffe84d" stroke="#b98a10" stroke-width="1.9"/><rect x="16.25" y="8.85" width="4.3" height="4.3" rx=".5" fill="#ffe84d" stroke="#b98a10" stroke-width="1.9"/><rect x="16.25" y="16.45" width="4.3" height="4.3" rx=".5" fill="#8fe9ff" stroke="#1b80d2" stroke-width="1.9"/></svg></i>
          <span class="t" style="left:40px;top:6px;font-size:12.6px;line-height:16px;color:#333;transform:translateX(0.58px) scaleX(0.9777);">CustomerPOInvoiceItem</span>
          <i class="ico" style="left:40.6px;top:25.4px"><svg width="11" height="11" viewBox="0 0 11 11" ><path d="M5.5 0 L11 5.5 L5.5 11 L0 5.5Z" fill="#ff6a13"/><path d="M5.6 1.8 C7.6 2.6 8.4 4 8.6 5.5 C8.4 7 7.6 8.4 5.6 9.2 C4.4 8 4 6.8 4 5.5 C4 4.2 4.4 3 5.6 1.8Z" fill="#fff"/><path d="M5 4.6 L9 5.5 L5 6.4Z" fill="#1a2be0"/></svg></i>
          <a class="t" style="left:53px;top:24px;font-size:11.5px;line-height:15px;color:#5a8fc2;transform:translateX(0.99px) scaleX(0.9787);">Staging to OnPrem DW &gt; Staging to OnPrem</a>
        </div>
      </div>
      <div class="td" style="left:198px;top:61px;width:199px;height:181px;border-right:1px solid #e0e0e0;box-sizing:border-box">
        <span class="t" style="left:5px;top:5px;font-size:12.6px;line-height:16px;color:#333;font-style:italic;transform:translateX(0.97px) scaleX(0.9061);">CustomerName</span>
      </div>
      <div class="td" style="left:397px;top:61px;width:197.5px;height:181px;overflow:hidden">
        <span class="t" style="left:6px;top:5px;font-size:12.6px;line-height:16px;color:#444;font-weight:bold;transform:translateX(0.23px) scaleX(0.8804);">Join:</span>
        <span class="t" style="left:5px;top:20px;font-size:12.6px;line-height:16px;color:#333;transform:translateX(0.79px) scaleX(0.9622);">CustomerID=CustomerID1</span>
        <span class="t" style="left:6px;top:40px;font-size:12.6px;line-height:16px;color:#444;font-weight:bold;transform:translateX(0.23px) scaleX(0.8804);">Join:</span>
        <span class="t" style="left:5px;top:55px;font-size:12.6px;line-height:16px;color:#333;transform:translateX(0.28px) scaleX(0.9916);">InvoiceNumber=InvoiceNumber1</span>
        <span class="t" style="left:6px;top:75px;font-size:12.6px;line-height:16px;color:#444;font-weight:bold;transform:translateX(0.23px) scaleX(0.8804);">Join:</span>
        <span class="t" style="left:5px;top:90px;font-size:12.6px;line-height:16px;color:#333;transform:translateX(0.28px) scaleX(0.9916);">InvoiceNumber=InvoiceNumber1 AND</span>
        <span class="t" style="left:6px;top:110px;font-size:12.6px;line-height:16px;color:#444;font-weight:bold;transform:translateX(0.23px) scaleX(0.8804);">Join:</span>
        <span class="t" style="left:5px;top:125px;font-size:12.6px;line-height:16px;color:#333;transform:translateX(0.42px) scaleX(0.9715);">PaymentID=PaymentID1</span>
        <span class="t" style="left:6px;top:145px;font-size:12.6px;line-height:16px;color:#444;font-weight:bold;transform:translateX(0.23px) scaleX(0.8804);">Join:</span>
        <span class="t" style="left:5px;top:160px;font-size:12.6px;line-height:16px;color:#333;transform:translateX(0.28px) scaleX(0.9916);">InvoiceNumber=InvoiceNumber1 AND</span>
      </div>
      <div class="strack" style="left:594.5px;top:61px;width:15.5px;height:181px;background:#fcfcfc;border-left:1px solid #ececec;box-sizing:border-box">
      </div>
      <i class="ico" style="left:598px;top:66px"><svg width="10" height="7"><path d="M0.4 7 L5 0.4 L9.6 7Z" fill="#8c8c8c"/></svg></i>
      <i class="ico" style="left:598px;top:231.39999999999998px"><svg width="10" height="7"><path d="M0.4 0 L5 6.6 L9.6 0Z" fill="#8c8c8c"/></svg></i>
      <div class="sthumb" style="left:598.2px;top:78.8px;width:8.6px;height:45px;background:#8c8c8c;border-radius:4.3px">
      </div>
    </section>
  </div>
<span class="t" style="left:1239.8px;top:130px;font-size:15px;line-height:15px;font-weight:bold;color:#2a7fc4;transform:rotate(90deg) scaleX(0.92);transform-origin:0 100%;">Details</span>
<div class="frame"></div>
</body></html>
